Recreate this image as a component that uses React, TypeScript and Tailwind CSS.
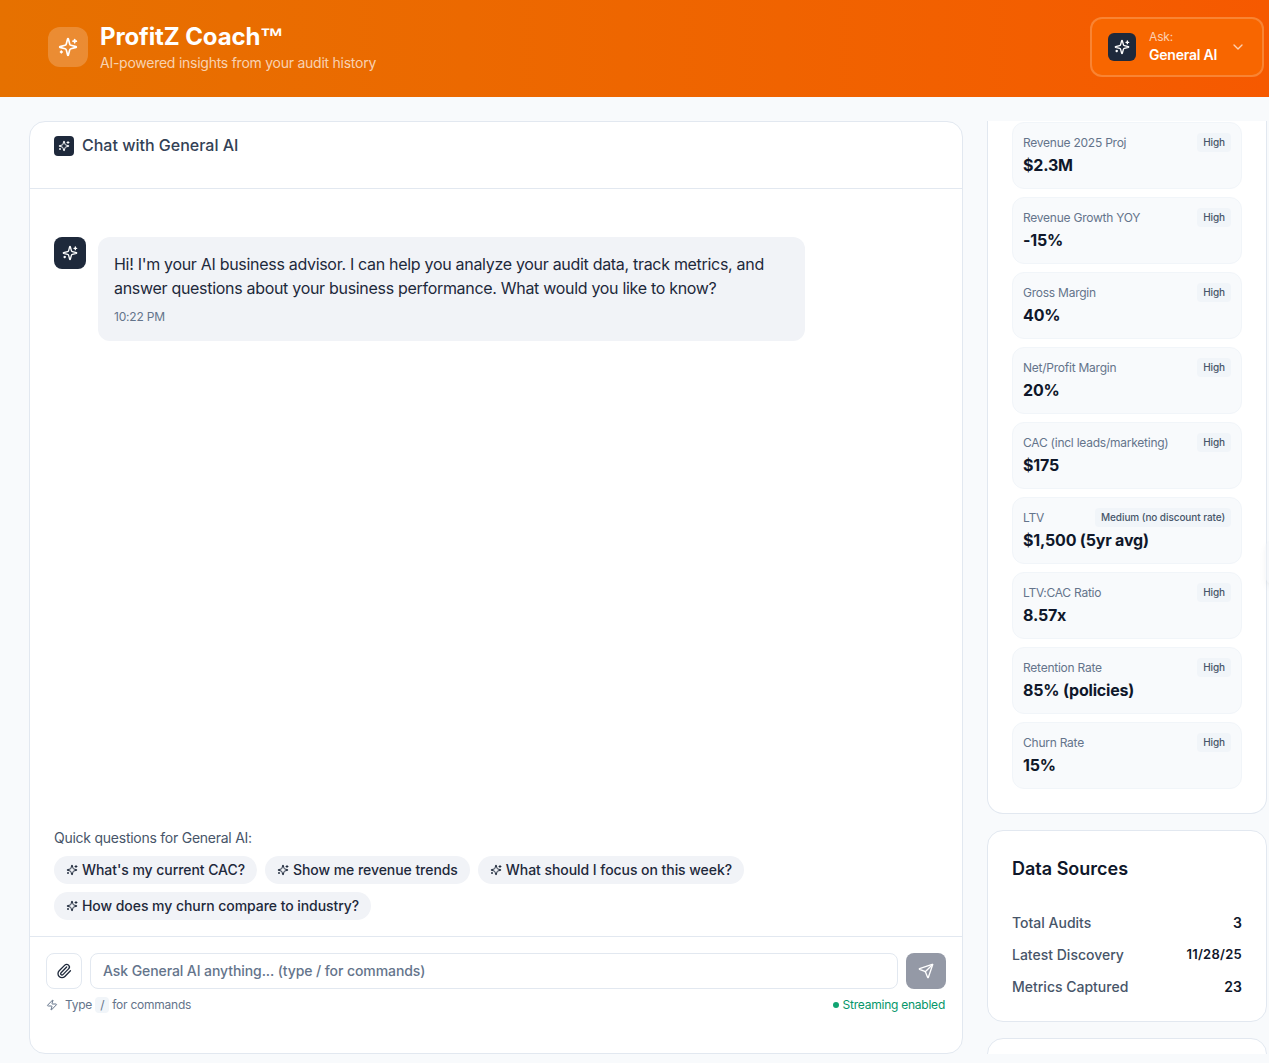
import { ChevronDown, Paperclip, Send, Zap } from "lucide-react"

const metrics = [
    { label: "Revenue 2025 Proj", value: "$2.3M", badge: "High" },
    { label: "Revenue Growth YOY", value: "-15%", badge: "High" },
    { label: "Gross Margin", value: "40%", badge: "High" },
    { label: "Net/Profit Margin", value: "20%", badge: "High" },
    { label: "CAC (incl leads/marketing)", value: "$175", badge: "High" },
    { label: "LTV", value: "$1,500 (5yr avg)", badge: "Medium (no discount rate)" },
    { label: "LTV:CAC Ratio", value: "8.57x", badge: "High" },
    { label: "Retention Rate", value: "85% (policies)", badge: "High" },
    { label: "Churn Rate", value: "15%", badge: "High" },
]

const questions = [
    "What's my current CAC?",
    "Show me revenue trends",
    "What should I focus on this week?",
    "How does my churn compare to industry?",
]

const sources = [
    { label: "Total Audits", value: "3", size: "text-sm" },
    { label: "Latest Discovery", value: "11/28/25", size: "text-[13px] tracking-[0.02em]" },
    { label: "Metrics Captured", value: "23", size: "text-sm" },
]

function Sparkle({ className }: { className: string }) {
    return (
        <svg viewBox="0 0 24 24" fill="none" stroke="currentColor" strokeWidth="2" strokeLinecap="round" strokeLinejoin="round" className={className}>
            <path d="M9.937 15.5A2 2 0 0 0 8.5 14.063l-6.135-1.582a.5.5 0 0 1 0-.962L8.5 9.936A2 2 0 0 0 9.937 8.5l1.582-6.135a.5.5 0 0 1 .963 0L14.063 8.5A2 2 0 0 0 15.5 9.937l6.135 1.581a.5.5 0 0 1 0 .964L15.5 14.063a2 2 0 0 0-1.437 1.437l-1.582 6.135a.5.5 0 0 1-.963 0z" />
            <path d="M20 3v4" />
            <path d="M22 5h-4" />
            <path d="M4 17v2" />
            <path d="M5 18H3" />
        </svg>
    )
}

function Header() {
    return (
        <header className="h-[97px] shrink-0 flex items-center pl-12 pr-[5px] pb-[3px] bg-gradient-to-r from-[#e67100] to-[#f65900]">
            <div className="w-10 h-10 rounded-xl bg-white/20 flex items-center justify-center">
                <Sparkle className="w-5 h-5 text-white" />
            </div>
            <div className="ml-3">
                <h1 className="text-2xl font-bold text-white tracking-[-0.005em]">ProfitZ Coach<span className="font-['Liberation_Sans',sans-serif]">™</span></h1>
                <p className="text-sm text-white/70 tracking-[-0.018em]">AI-powered insights from your audit history</p>
            </div>
            <button type="button" className="ml-auto w-[174px] h-[60px] flex items-center pl-4 rounded-xl border-2 border-white/20 bg-[#f86600]">
                <div className="w-7 h-7 rounded-md bg-[#1e293b] flex items-center justify-center">
                    <Sparkle className="w-4 h-4 text-white" />
                </div>
                <div className="ml-[13px] text-left">
                    <p className="text-xs leading-4 text-white/70 tracking-[-0.01em]">Ask:</p>
                    <p className="text-sm leading-5 font-semibold text-white tracking-[-0.015em]">General AI</p>
                </div>
                <ChevronDown className="w-4 h-4 ml-auto mr-4 text-white/70" />
            </button>
        </header>
    )
}

function Chat() {
    return (
        <section className="w-[934px] shrink-0 flex flex-col bg-white rounded-2xl border border-[#e2e8f0]">
            <div className="h-[67px] shrink-0 px-6 pt-[14px] border-b border-[#e2e8f0] flex items-start gap-2">
                <div className="w-5 h-5 rounded bg-[#1e293b] flex items-center justify-center">
                    <Sparkle className="w-3 h-3 text-white" />
                </div>
                <h2 className="text-base leading-5 font-medium text-[#334155] -mt-px">Chat with General AI</h2>
            </div>

            <div className="flex-1 px-6 pt-12">
                <div className="flex gap-3">
                    <div className="w-8 h-8 shrink-0 rounded-lg bg-[#1e293b] flex items-center justify-center">
                        <Sparkle className="w-4 h-4 text-white" />
                    </div>
                    <div className="w-[707px] bg-[#f1f3f7] rounded-xl p-4">
                        <p className="text-base text-[#1e293b] tracking-[-0.019em] -mt-px">Hi! I'm your AI business advisor. I can help you analyze your audit data, track metrics, and answer questions about your business performance. What would you like to know?</p>
                        <p className="text-xs text-[#64748b] mt-[9px] tracking-[-0.015em]">10:22 PM</p>
                    </div>
                </div>
            </div>

            <div className="px-6 pb-4">
                <p className="text-sm text-[#475569] mb-2 tracking-[-0.018em]">Quick questions for General AI:</p>
                <div className="flex flex-wrap gap-2">
                    {questions.map((q) => (
                        <button key={q} type="button" className="h-7 px-3 flex items-center gap-1 rounded-full bg-[#f1f3f7] text-sm font-medium text-[#1e293b] tracking-[-0.004em]">
                            <Sparkle className="w-3 h-3" />
                            {q}
                        </button>
                    ))}
                </div>
            </div>

            <div className="border-t border-[#e2e8f0] px-4 pt-4 h-[117px] shrink-0">
                <div className="flex gap-2">
                    <button type="button" className="w-9 h-9 rounded-lg border border-[#e2e8f0] flex items-center justify-center text-[#1e293b]">
                        <Paperclip className="w-4 h-4" />
                    </button>
                    <div className="flex-1 h-9 rounded-lg border border-[#e2e8f0] px-3 flex items-center text-sm font-medium text-[#64748b] tracking-[-0.006em]">
                        Ask General AI anything... (type / for commands)
                    </div>
                    <button type="button" className="w-10 h-9 rounded-lg bg-[#9499a6] flex items-center justify-center text-white">
                        <Send className="w-4 h-4" />
                    </button>
                </div>
                <div className="flex items-center mt-2 text-xs text-[#64748b] tracking-[-0.02em]">
                    <Zap className="w-3 h-3 mr-[7px]" />
                    <span>Type</span>
                    <span className="mx-[3px] px-[5px] rounded bg-[#f1f5f9]">/</span>
                    <span>for commands</span>
                    <span className="ml-auto mr-px text-[#059669] flex items-center gap-1">
                        <span className="w-1.5 h-1.5 rounded-full bg-[#10a472]"></span>
                        Streaming enabled
                    </span>
                </div>
            </div>
        </section>
    )
}

function Sidebar() {
    return (
        <aside className="relative w-[280px] shrink-0 flex flex-col gap-4 overflow-hidden">
            <div className="bg-white rounded-b-2xl border-x border-b border-[#e2e8f0] px-6 pt-px pb-6 flex flex-col gap-2">
                {metrics.map((m) => (
                    <div key={m.label} className="h-[67px] rounded-xl bg-[#f8fafc] border border-[#f1f5f9] p-2.5">
                        <div className="flex items-start justify-between">
                            <span className="text-xs leading-[19px] text-[#64748b] tracking-[-0.02em]">{m.label}</span>
                            <span className="px-1.5 py-0.5 rounded bg-[#f1f5f9] text-[10px] leading-[15px] font-medium text-[#475569] tracking-[-0.008em]">{m.badge}</span>
                        </div>
                        <p className="text-base leading-6 font-bold text-[#0f172a] mt-px tracking-[-0.012em]">{m.value}</p>
                    </div>
                ))}
            </div>

            <div className="bg-white rounded-2xl border border-[#e2e8f0] p-6">
                <h3 className="text-lg font-semibold text-[#0f172a] mb-[30px]">Data Sources</h3>
                <div className="flex flex-col gap-3">
                    {sources.map((s) => (
                        <div key={s.label} className="flex items-center justify-between h-5">
                            <span className="text-sm font-medium text-[#475569]">{s.label}</span>
                            <span className={`${s.size} font-semibold text-[#0f172a]`}>{s.value}</span>
                        </div>
                    ))}
                </div>
            </div>

            <div className="h-10 shrink-0 bg-white rounded-t-2xl border border-[#e2e8f0]"></div>
        </aside>
    )
}

export default function App() {
    return (
        <div className="relative h-screen flex flex-col overflow-hidden bg-[#f8fafc] font-['Inter',sans-serif]">
            <Header />
            <main className="flex-1 min-h-0 flex gap-6 pl-[29px] pt-6 pb-[9px]">
                <Chat />
                <Sidebar />
            </main>
            <div className="absolute -right-[12px] top-[540px] w-4 h-11 rounded-full bg-[#f1f5f9] shadow-md opacity-40"></div>
        </div>
    )
}
